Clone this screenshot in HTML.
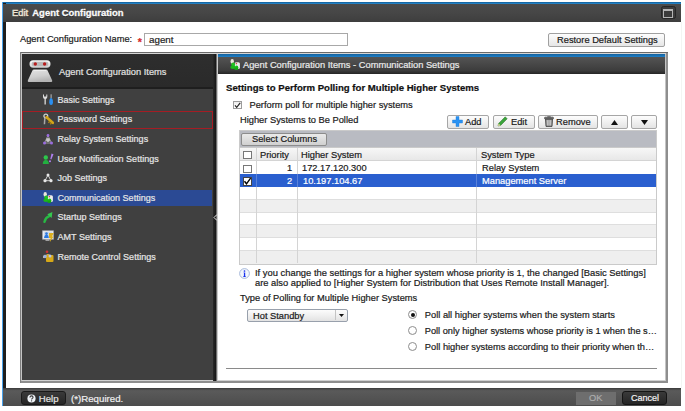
<!DOCTYPE html>
<html><head><meta charset="utf-8">
<style>
*{margin:0;padding:0;box-sizing:border-box}
html,body{width:685px;height:411px;overflow:hidden;background:#fff}
body{position:relative;font-family:"Liberation Sans",sans-serif;font-size:9.3px;color:#1a1a1a;-webkit-text-stroke:0.2px currentColor}
.a{position:absolute}
.t{position:absolute;white-space:pre;line-height:1}
.btn{border:1px solid #a6a6a6;border-radius:2px;background:linear-gradient(#fdfdfd,#e4e4e4)}
.radio{width:9px;height:9px;border-radius:50%;border:1px solid #8e8e8e;background:radial-gradient(circle at 50% 40%,#fff 55%,#e6e6e6)}
</style></head><body>
<!-- window frame -->
<div class="a" style="left:2px;top:2px;width:679px;height:2px;background:linear-gradient(#0e5c98,#2a8cd0)"></div>
<div class="a" style="left:2px;top:2px;width:1.3px;height:404px;background:#4aa2ea"></div>
<div class="a" style="left:3px;top:3px;width:3px;height:403px;background:#1e1e1e"></div>
<!-- title bar -->
<div class="a" style="left:3px;top:4px;width:678px;height:17.5px;background:linear-gradient(#4b4b4b,#464646 50%,#3e3e3e)"></div>
<div class="t" style="left:12px;top:7.8px;color:#ece4d4;font-size:9.4px;text-shadow:0 1px 0 #222;-webkit-text-stroke:0.45px #ece4d4">Edit</div>
<div class="t" style="left:32.3px;top:7.8px;font-weight:bold;color:#fafafa;font-size:9.45px;text-shadow:0 1px 0 #1a1a1a;-webkit-text-stroke:0.3px #fff">Agent Configuration</div>
<!-- maximize icon -->
<div class="a" style="left:661px;top:6px;width:14.5px;height:13px;border-radius:2.5px;background:#3c3c3c;border:1px solid #262626"></div>
<div class="a" style="left:663px;top:9px;width:10.3px;height:8.5px;border:1px solid #b4b4b4;border-top-width:2px;background:#3a3a3a"></div>

<!-- name row -->
<div class="t" style="left:20px;top:35px">Agent Configuration Name:</div>
<div class="t" style="left:137.8px;top:37.3px;color:#d42a2a;font-size:10.5px;font-weight:bold">*</div>
<div class="a" style="left:144px;top:33px;width:204px;height:13px;border:1px solid #a8a8a8;background:#fff"></div>
<div class="t" style="left:149px;top:35px;font-size:9.8px">agent</div>
<div class="a" style="left:548px;top:33px;width:117px;height:14px;border:1px solid #a0a0a0;border-radius:2px;background:linear-gradient(#fdfdfd,#e6e6e6)"></div>
<div class="t" style="left:557px;top:36px">Restore Default Settings</div>

<!-- sidebar -->
<!-- container borders -->
<div class="a" style="left:20px;top:52px;width:648px;height:331px;background:#8e8e8e"></div>
<div class="a" style="left:20px;top:52px;width:648px;height:1px;background:#6a6a6a"></div>
<div class="a" style="left:20px;top:52px;width:1px;height:331px;background:#7e7e7e"></div>
<div class="a" style="left:21px;top:53px;width:645px;height:1px;background:#d6d6d6"></div>
<div class="a" style="left:21px;top:53px;width:1px;height:328px;background:#c4c4c4"></div>
<div class="a" style="left:22px;top:380px;width:643px;height:1px;background:#d0d0d0"></div>
<div class="a" style="left:665px;top:54px;width:1px;height:327px;background:#c4c4c4"></div>
<div class="a" style="left:22px;top:54px;width:191px;height:326px;background:#404040"></div>
<div class="a" style="left:22px;top:54px;width:191px;height:33px;background:linear-gradient(#2e2e2e,#2a2a2a)"></div>
<div class="a" style="left:213px;top:54px;width:3px;height:326.5px;background:linear-gradient(90deg,#2a2a2a,#161616)"></div>
<div class="a" style="left:216px;top:54px;width:1px;height:326.5px;background:#6e6e6e"></div>
<div class="a" style="left:217px;top:54px;width:1px;height:326.5px;background:#cacaca"></div>


<!-- sidebar content -->
<svg class="a" style="left:26px;top:58px" width="30" height="28" viewBox="0 0 30 28">
 <defs>
  <linearGradient id="hd" x1="0" y1="0" x2="0" y2="1"><stop offset="0" stop-color="#fafafa"/><stop offset="1" stop-color="#d0d0d0"/></linearGradient>
  <linearGradient id="bd" x1="0" y1="0" x2="0.3" y2="1"><stop offset="0" stop-color="#e4e4e4"/><stop offset="0.6" stop-color="#cfcfcf"/><stop offset="1" stop-color="#b4b4b4"/></linearGradient>
 </defs>
 <rect x="3.5" y="2.3" width="21" height="7.4" rx="3.7" fill="url(#hd)"/>
 <rect x="5.6" y="3.8" width="16.8" height="4.4" rx="2.2" fill="#b9b9b9"/>
 <circle cx="9.3" cy="6" r="1.7" fill="#b81c1c"/>
 <circle cx="18.6" cy="6" r="1.7" fill="#b81c1c"/>
 <path d="M8 11.6 L20 11.6 Q21.3 11.6 21.7 12.8 L26.2 22.6 Q26.6 24.1 25 24.1 L3 24.1 Q1.4 24.1 1.8 22.6 L6.3 12.8 Q6.7 11.6 8 11.6 Z" fill="url(#bd)"/>
 <path d="M8 12.6 L20 12.6" stroke="#f4f4f4" stroke-width="0.8"/>
</svg>
<div class="t" style="left:59px;top:67.5px;color:#e2e2e2">Agent Configuration Items</div>
<div class="a" style="left:22px;top:87px;width:191px;height:2px;background:#1e1e1e"></div>

<div class="a" style="left:22px;top:111px;width:191px;height:18px;border:1px solid #a51d24"></div>
<div class="a" style="left:22px;top:190px;width:190px;height:16px;background:#2b4a94"></div>

<div class="t" style="left:57.6px;top:95.5px;color:#e6e6e6;font-size:9px">Basic Settings</div>
<div class="t" style="left:57.6px;top:115px;color:#e6e6e6;font-size:9px">Password Settings</div>
<div class="t" style="left:57.6px;top:134.8px;color:#e6e6e6;font-size:9px">Relay System Settings</div>
<div class="t" style="left:57.6px;top:154.5px;color:#e6e6e6;font-size:9px">User Notification Settings</div>
<div class="t" style="left:57.6px;top:173.7px;color:#e6e6e6;font-size:9px">Job Settings</div>
<div class="t" style="left:57.6px;top:193.7px;color:#e6e6e6;font-size:9px">Communication Settings</div>
<div class="t" style="left:57.6px;top:213.3px;color:#e6e6e6;font-size:9px">Startup Settings</div>
<div class="t" style="left:57.6px;top:233.2px;color:#e6e6e6;font-size:9px">AMT Settings</div>
<div class="t" style="left:57.6px;top:253.2px;color:#e6e6e6;font-size:9px">Remote Control Settings</div>

<!-- icons -->
<svg class="a" style="left:42px;top:94px" width="12" height="12" viewBox="0 0 12 12">
 <path d="M1 0.5 L1 3 Q1 4.5 2.5 5 L2.5 10.5 L3.8 10.5 L3.8 5 Q5.3 4.5 5.3 3 L5.3 0.5 L4.3 0.5 L4.3 2.5 L2 2.5 L2 0.5 Z" fill="#dcdcdc"/>
 <rect x="8.6" y="0.3" width="1" height="4" fill="#bcbcbc"/>
 <path d="M8.2 4.3 L10 4.3 Q11.2 6 11 8.5 Q10.8 11 9.1 11 Q7.4 11 7.2 8.5 Q7 6 8.2 4.3 Z" fill="#2a8ff0"/>
</svg>
<svg class="a" style="left:42px;top:113px" width="13" height="13" viewBox="0 0 13 13">
 <circle cx="3.8" cy="3" r="1.9" fill="none" stroke="#d0d0d0" stroke-width="1.3"/>
 <path d="M2.8 4.8 L2.4 11.2" stroke="#a8a8a8" stroke-width="1.5"/>
 <path d="M4.6 4.2 L10.8 9.8" stroke="#d2a418" stroke-width="2.6" stroke-linecap="round"/>
 <path d="M7.5 8.2 L6.6 10 M9.3 9.8 L8.4 11.4" stroke="#b88a10" stroke-width="1.3"/>
</svg>
<svg class="a" style="left:42px;top:133px" width="12" height="12" viewBox="0 0 12 12">
 <path d="M6 2.5 L2.5 10 M6 2.5 L9.5 10 M2.5 10 L9.5 10" stroke="#9a9a9a" stroke-width="1" fill="none"/>
 <circle cx="6" cy="7" r="2" fill="#c8c8c8"/>
 <circle cx="6" cy="2.5" r="1.4" fill="#9a6ce0"/>
 <circle cx="2.5" cy="10" r="1.5" fill="#9a6ce0"/>
 <circle cx="9.5" cy="10" r="1.5" fill="#9a6ce0"/>
</svg>
<svg class="a" style="left:42px;top:152px" width="13" height="13" viewBox="0 0 13 13">
 <circle cx="3.8" cy="5.5" r="2.2" fill="#2cc84a"/>
 <path d="M0.8 12 Q0.8 8 3.8 8 Q6.8 8 6.8 12 Z" fill="#22b040"/>
 <path d="M9.5 1.5 L11.5 2.3 L9.3 7.5 L8.3 7 Z" fill="#b07ff0"/>
 <circle cx="8" cy="9.3" r="1" fill="#b07ff0"/>
</svg>
<svg class="a" style="left:42px;top:172px" width="12" height="12" viewBox="0 0 12 12">
 <path d="M6 3 L3 8.7 M6 3 L9 8.7 M3 8.7 L9 8.7" stroke="#cfcfcf" stroke-width="1" fill="none"/>
 <circle cx="6" cy="3" r="1.5" fill="#e8e8e8"/>
 <circle cx="3" cy="8.7" r="1.6" fill="#e8e8e8"/>
 <circle cx="9" cy="8.7" r="1.6" fill="#e8e8e8"/>
</svg>
<svg class="a" style="left:42px;top:191px" width="13" height="13" viewBox="0 0 13 13">
 <ellipse cx="3.2" cy="3.4" rx="1.7" ry="2.4" fill="#ece8dc"/>
 <rect x="5.5" y="4.3" width="5.4" height="6.8" rx="1.5" fill="#ececec"/>
 <circle cx="7.4" cy="5.6" r="0.8" fill="#d84848"/>
 <circle cx="4.2" cy="6.4" r="1.9" fill="#22c222"/>
 <ellipse cx="3.9" cy="9.2" rx="2.6" ry="1.8" fill="#1cb81c"/>
 <circle cx="7.6" cy="9.2" r="1.7" fill="#18c018"/>
 <ellipse cx="7.3" cy="10.8" rx="2.1" ry="1.2" fill="#14a814"/>
</svg>
<svg class="a" style="left:43px;top:211px" width="11" height="12" viewBox="0 0 11 12">
 <path d="M1.5 10.8 Q2.5 6.5 6.3 5.2" stroke="#28b844" stroke-width="2.4" fill="none" stroke-linecap="round"/>
 <path d="M4.3 3.2 L9.4 1 L8.6 7 Z" fill="#34c850"/>
</svg>
<svg class="a" style="left:42px;top:230px" width="13" height="13" viewBox="0 0 13 13">
 <rect x="0.6" y="0.8" width="10.8" height="8.4" fill="#eef0f4" stroke="#a4a8b0" stroke-width="0.8"/>
 <rect x="1.8" y="2" width="8.4" height="6" fill="#cdd8e8"/>
 <path d="M2 8 Q2.5 4.5 4.5 4.5 Q6.5 4.5 6.8 8 Z" fill="#2a78e0"/>
 <circle cx="4.5" cy="3.6" r="1.3" fill="#2a78e0"/>
 <path d="M7 3 L11.8 3 L10 6.5 L11.5 6.5 L7.8 12.2 L8.6 8 L7 8 Z" fill="#dcb020"/>
 <rect x="3.5" y="9.5" width="4" height="1.2" fill="#c8c8c8"/>
</svg>
<svg class="a" style="left:42px;top:250px" width="13" height="13" viewBox="0 0 13 13">
 <circle cx="5" cy="1.8" r="1.3" fill="#d03030"/>
 <path d="M1 6 L6 4 L11 6 L11 8 L1 8 Z" fill="#e0c060"/>
 <rect x="4" y="5" width="7.5" height="7" rx="1" fill="#d6a818"/>
 <circle cx="3" cy="6.5" r="1.8" fill="#9ab0e0"/>
 <circle cx="8" cy="6" r="1.5" fill="#b8c6e8"/>
</svg>
<!-- splitter arrow -->
<svg class="a" style="left:213px;top:214px" width="5" height="7" viewBox="0 0 5 7"><path d="M4 0.5 L1 3.5 L4 6.5" stroke="#e8e8e8" stroke-width="1" fill="none"/></svg>

<!-- right panel -->
<div class="a" style="left:218px;top:54px;width:447px;height:326px;background:#fff"></div>
<div class="a" style="left:218px;top:54px;width:447px;height:2.5px;background:linear-gradient(#14619e,#1e80c8)"></div>
<div class="a" style="left:218px;top:56.5px;width:447px;height:17.5px;background:linear-gradient(#545454,#3c3c3c 80%,#262626)"></div>
<svg class="a" style="left:228.5px;top:57.5px" width="13" height="13" viewBox="0 0 13 13">
 <ellipse cx="3.2" cy="3.4" rx="1.7" ry="2.4" fill="#ece8dc"/>
 <rect x="5.5" y="4.3" width="5.4" height="6.8" rx="1.5" fill="#ececec"/>
 <circle cx="7.4" cy="5.6" r="0.8" fill="#d84848"/>
 <circle cx="4.2" cy="6.4" r="1.9" fill="#22c222"/>
 <ellipse cx="3.9" cy="9.2" rx="2.6" ry="1.8" fill="#1cb81c"/>
 <circle cx="7.6" cy="9.2" r="1.7" fill="#18c018"/>
 <ellipse cx="7.3" cy="10.8" rx="2.1" ry="1.2" fill="#14a814"/>
</svg>
<div class="t" style="left:243px;top:61px;color:#eaeaea">Agent Configuration Items - Communication Settings</div>


<!-- content -->
<div class="t" style="left:226px;top:83.2px;font-weight:bold;font-size:9.6px;color:#111">Settings to Perform Polling for Multiple Higher Systems</div>
<div class="a" style="left:233px;top:100.5px;width:8.5px;height:8.5px;border:1px solid #9c9c9c;background:linear-gradient(#eee,#fff)"></div>
<svg class="a" style="left:233px;top:100.5px" width="9" height="9" viewBox="0 0 9 9"><path d="M2 4.3 L3.7 6.4 L7.2 1.8" stroke="#222" stroke-width="1.15" fill="none"/></svg>
<div class="t" style="left:249.5px;top:100.8px">Perform poll for multiple higher systems</div>
<div class="t" style="left:240px;top:115.8px">Higher Systems to Be Polled</div>

<!-- toolbar buttons -->
<div class="a btn" style="left:447px;top:115px;width:42px;height:14px"></div>
<div class="a btn" style="left:493px;top:115px;width:42px;height:14px"></div>
<div class="a btn" style="left:538px;top:115px;width:60px;height:14px"></div>
<div class="a btn" style="left:601px;top:115px;width:27px;height:14px"></div>
<div class="a btn" style="left:631px;top:115px;width:26px;height:14px"></div>
<svg class="a" style="left:452px;top:116px" width="11" height="11" viewBox="0 0 11 11"><path d="M4 0.5 H7 V4 H10.5 V7 H7 V10.5 H4 V7 H0.5 V4 H4 Z" fill="#2a92f2" stroke="#1a78d8" stroke-width="0.4" stroke-linejoin="round"/></svg>
<div class="t" style="left:465px;top:118px">Add</div>
<svg class="a" style="left:497px;top:116px" width="11" height="11" viewBox="0 0 11 11"><path d="M1 10 L1.6 7.4 L8.2 0.8 L10.2 2.8 L3.6 9.4 Z" fill="#3aa43a" stroke="#2a6a2a" stroke-width="0.5"/><path d="M1 10 L1.6 7.4 L3.6 9.4 Z" fill="#e8d8a0"/></svg>
<div class="t" style="left:511px;top:118px">Edit</div>
<svg class="a" style="left:543.5px;top:115.8px" width="10" height="11" viewBox="0 0 10 11">
 <rect x="0.6" y="1.2" width="8.8" height="1.8" rx="0.5" fill="#8a8a8a" stroke="#333" stroke-width="0.7"/>
 <rect x="3.3" y="0.3" width="3.4" height="1.2" fill="#555"/>
 <path d="M1.5 3.2 H8.5 L8 10.4 H2 Z" fill="#9a9a9a" stroke="#333" stroke-width="0.8"/>
 <path d="M3.4 4.2 V9.4 M5 4.2 V9.4 M6.6 4.2 V9.4" stroke="#e4e4e4" stroke-width="0.6"/>
</svg>
<div class="t" style="left:556px;top:118px">Remove</div>
<svg class="a" style="left:611px;top:119.5px" width="7" height="5" viewBox="0 0 7 5"><path d="M3.5 0 L7 5 H0 Z" fill="#111"/></svg>
<svg class="a" style="left:640.8px;top:119.7px" width="7" height="5" viewBox="0 0 7 5"><path d="M0 0 H7 L3.5 5 Z" fill="#111"/></svg>

<!-- table -->
<div class="a" style="left:239px;top:130px;width:418px;height:134.7px;background:#cacaca"></div>
<div class="a" style="left:240px;top:131px;width:416px;height:16px;background:#b9bbc2"></div>
<div class="a" style="left:241px;top:133px;width:86px;height:13px;border:1px solid #8c8c8c;border-radius:2px;background:linear-gradient(#eaeaea,#d0d0d0)"></div>
<div class="t" style="left:252px;top:135px">Select Columns</div>
<div class="a" style="left:240px;top:148px;width:416px;height:13px;background:linear-gradient(#f7f7f7,#e6e6e6)"></div>
<div class="a" style="left:240px;top:161px;width:416px;height:13px;background:#fff"></div>
<div class="a" style="left:240px;top:174px;width:416px;height:13px;background:#2a5fcf"></div>
<div class="a" style="left:240px;top:187px;width:416px;height:13px;background:#fff"></div>
<div class="a" style="left:240px;top:200px;width:416px;height:12.7px;background:#efefef"></div>
<div class="a" style="left:240px;top:213px;width:416px;height:12px;background:#fff"></div>
<div class="a" style="left:240px;top:225px;width:416px;height:13px;background:#efefef"></div>
<div class="a" style="left:240px;top:238px;width:416px;height:13px;background:#fff"></div>
<div class="a" style="left:240px;top:251px;width:416px;height:12.7px;background:#efefef"></div>
<!-- grid h lines -->
<div class="a" style="left:240px;top:160px;width:416px;height:1px;background:#d4d4d4"></div>
<div class="a" style="left:240px;top:199px;width:416px;height:1px;background:#dedede"></div>
<div class="a" style="left:240px;top:212px;width:416px;height:1px;background:#dedede"></div>
<div class="a" style="left:240px;top:224px;width:416px;height:1px;background:#dedede"></div>
<div class="a" style="left:240px;top:237px;width:416px;height:1px;background:#dedede"></div>
<div class="a" style="left:240px;top:250px;width:416px;height:1px;background:#dedede"></div>
<!-- grid v lines -->
<div class="a" style="left:256px;top:148px;width:1px;height:115px;background:#d4d4d4"></div>
<div class="a" style="left:297px;top:148px;width:1px;height:115px;background:#d4d4d4"></div>
<div class="a" style="left:476px;top:148px;width:1px;height:115px;background:#d4d4d4"></div>
<div class="a" style="left:240px;top:174px;width:416px;height:13px;background:#2a5fcf"></div>
<div class="a" style="left:256px;top:174px;width:1px;height:13px;background:#5a82d8"></div>
<div class="a" style="left:297px;top:174px;width:1px;height:13px;background:#5a82d8"></div>
<div class="a" style="left:476px;top:174px;width:1px;height:13px;background:#5a82d8"></div>
<!-- checkboxes -->
<div class="a" style="left:243px;top:151px;width:9px;height:8px;border:1px solid #777;background:#fff"></div>
<div class="a" style="left:243px;top:164.8px;width:9px;height:8px;border:1px solid #777;background:#fff"></div>
<div class="a" style="left:243px;top:177px;width:9px;height:9px;border:1px solid #444;background:#fff"></div>
<svg class="a" style="left:243px;top:177px" width="9" height="9" viewBox="0 0 9 9"><path d="M1.5 4.2 L3.5 6.8 L7.6 1.2" stroke="#000" stroke-width="1.4" fill="none"/></svg>
<div class="t" style="left:260px;top:151px">Priority</div>
<div class="t" style="left:301px;top:151px">Higher System</div>
<div class="t" style="left:481px;top:151px">System Type</div>
<div class="t" style="left:287px;top:164px">1</div>
<div class="t" style="left:302px;top:164px">172.17.120.300</div>
<div class="t" style="left:482px;top:164px">Relay System</div>
<div class="t" style="left:287px;top:177px;color:#fff">2</div>
<div class="t" style="left:303px;top:177px;color:#fff">10.197.104.67</div>
<div class="t" style="left:482px;top:177px;color:#fff">Management Server</div>

<!-- info -->
<svg class="a" style="left:239px;top:267.5px" width="11" height="11" viewBox="0 0 11 11"><circle cx="5.5" cy="5.5" r="4.9" fill="#f2f6fc" stroke="#9fb2d6" stroke-width="0.9"/><path d="M4.6 4.4 H6.2 V8.2 H6.8 V8.9 H4.2 V8.2 H4.9 V5.1 H4.6 Z" fill="#1830ee"/><circle cx="5.5" cy="3" r="0.85" fill="#1830ee"/></svg>
<div class="t" style="left:255px;top:269px;font-size:9.38px">If you change the settings for a higher system whose priority is 1, the changed [Basic Settings]</div>
<div class="t" style="left:255px;top:279px;font-size:9.33px">are also applied to [Higher System for Distribution that Uses Remote Install Manager].</div>
<div class="t" style="left:240px;top:294px">Type of Polling for Multiple Higher Systems</div>

<!-- dropdown -->
<div class="a" style="left:246.5px;top:308.5px;width:101px;height:13px;border:1px solid #98a0ac;border-radius:2px;background:linear-gradient(#fcfcfc,#f0f0f0 50%,#e2e2e2)"></div>
<div class="a" style="left:335px;top:310px;width:1px;height:10px;background:#c4c4c4"></div>
<svg class="a" style="left:339px;top:313.5px" width="5" height="3" viewBox="0 0 5 3"><path d="M0 0 H5 L2.5 3 Z" fill="#111"/></svg>
<div class="t" style="left:253px;top:312px">Hot Standby</div>

<!-- radios -->
<div class="a radio" style="left:408px;top:310px"></div>
<div class="a" style="left:410.5px;top:312.5px;width:4px;height:4px;border-radius:50%;background:#111"></div>
<div class="a radio" style="left:408px;top:326px"></div>
<div class="a radio" style="left:408px;top:342px"></div>
<div class="t" style="left:424.8px;top:311px">Poll all higher systems when the system starts</div>
<div class="t" style="left:424.8px;top:327px;font-size:9.22px">Poll only higher systems whose priority is 1 when the s…</div>
<div class="t" style="left:424.8px;top:343px">Poll higher systems according to their priority when th…</div>

<div class="a" style="left:226px;top:368px;width:431px;height:1px;background:#8a8a8a"></div>

<!-- footer -->
<div class="a" style="left:3px;top:388px;width:678px;height:18px;background:linear-gradient(#3a3a3a,#5a5a5a 15%,#4c4c4c)"></div>

<div class="a" style="left:21px;top:391px;width:45px;height:14px;border-radius:3px;border:1px solid #1a1a1a;background:linear-gradient(#3a3a3a,#262626)"></div>
<svg class="a" style="left:26.5px;top:393.8px" width="9" height="9" viewBox="0 0 11 11"><circle cx="5.5" cy="5.5" r="5" fill="#f0f4f8"/><path d="M3.6 4.2 Q3.6 2.3 5.5 2.3 Q7.4 2.3 7.4 4 Q7.4 5 6.2 5.6 Q5.7 5.9 5.7 6.8" stroke="#333" stroke-width="1.3" fill="none"/><circle cx="5.6" cy="8.4" r="0.8" fill="#333"/></svg>
<div class="t" style="left:38.8px;top:394px;color:#e4e4e4;font-size:9.6px">Help</div>
<div class="t" style="left:71px;top:393.8px;color:#f0f0f0;font-size:9.7px">(*)Required.</div>
<div class="a" style="left:576px;top:392px;width:40px;height:13px;background:#6e6e6e"></div>
<div class="t" style="left:589px;top:394px;color:#acacac">OK</div>
<div class="a" style="left:622px;top:391px;width:45px;height:14px;border-radius:3px;border:1px solid #151515;background:linear-gradient(#3a3a3a,#252525)"></div>
<div class="t" style="left:631px;top:394px;color:#f4f4f4;font-size:9px">Cancel</div>
<div class="a" style="left:681px;top:22px;width:1px;height:366px;background:#f3f5f3"></div>
</body></html>
